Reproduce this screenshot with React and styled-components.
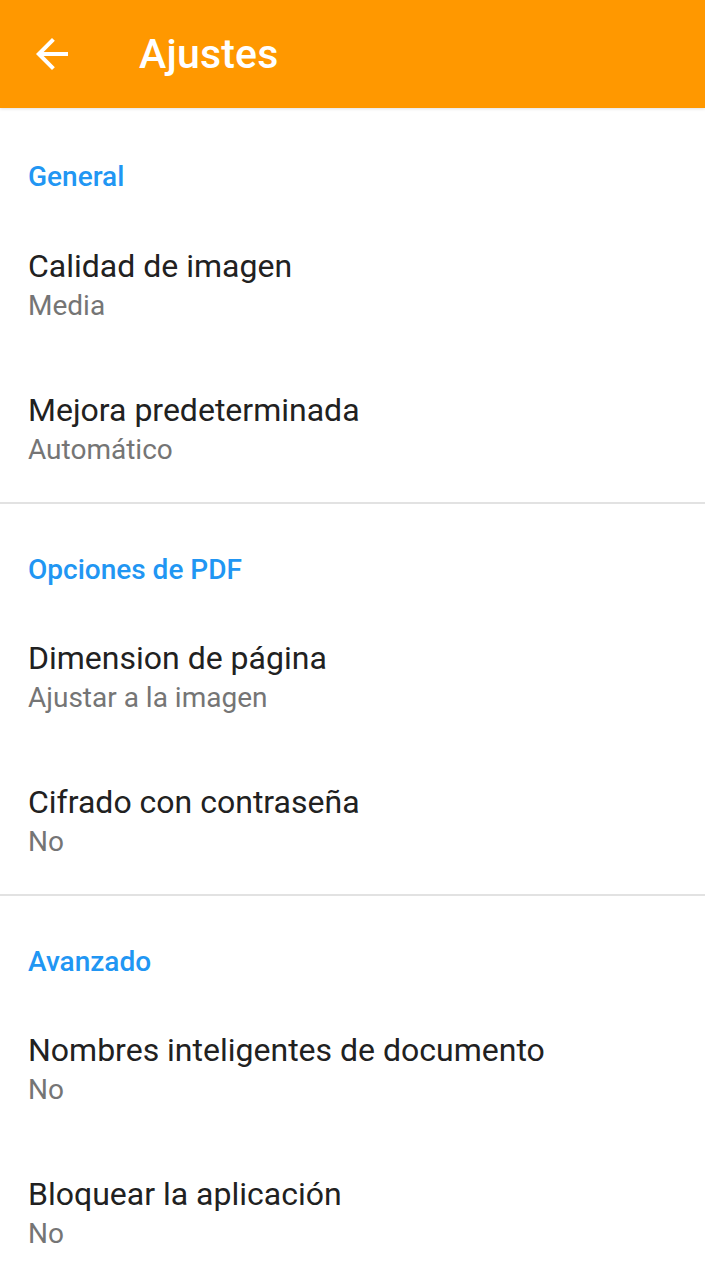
import React from "react";
import styled, { createGlobalStyle } from "styled-components";

const Global = createGlobalStyle`
  html, body { margin: 0; padding: 0; background: #ffffff; }
  body { font-family: Roboto, "Noto Sans", "Liberation Sans", sans-serif; -webkit-font-smoothing: antialiased; }
  * { box-sizing: border-box; }
`;

const Page = styled.div`
  width: 705px;
  min-height: 1279px;
  background: #ffffff;
  overflow: hidden;
`;

const Toolbar = styled.header`
  height: 108px;
  background: #ff9800;
  display: flex;
  align-items: center;
  padding-left: 28px;
  box-shadow: 0 1px 3px rgba(0, 0, 0, 0.12);
`;

const IconButton = styled.button`
  width: 48px;
  height: 48px;
  border: 0;
  padding: 0;
  background: transparent;
  display: flex;
  align-items: center;
  justify-content: center;
  color: #ffffff;
`;

const ToolbarTitle = styled.h1`
  margin: 0 0 0 63px;
  font-size: 41px;
  line-height: 48px;
  font-weight: 500;
  color: #ffffff;
  letter-spacing: 0.2px;
`;

const Section = styled.section`
  border-top: ${(p) => (p.$first ? "none" : "2px solid #e2e2e2")};
`;

const Category = styled.div`
  height: ${(p) => (p.$first ? "106px" : "102px")};
  padding: ${(p) => (p.$first ? "53px" : "50px")} 28px 0 28px;
  font-size: 28px;
  line-height: 32px;
  font-weight: 500;
  color: #2196f3;
`;

const Item = styled.div`
  height: 144px;
  padding: 0 28px;
  display: flex;
  flex-direction: column;
  justify-content: center;
`;

const ItemTitle = styled.div`
  font-size: 32px;
  line-height: 40px;
  color: #212121;
`;

const ItemSummary = styled.div`
  font-size: 28px;
  line-height: 40px;
  color: #757575;
`;

const BackArrow = () => (
  <svg width="48" height="48" viewBox="0 0 24 24" fill="currentColor">
    <path d="M20 11H7.83l5.59-5.59L12 4l-8 8 8 8 1.41-1.41L7.83 13H20v-2z" />
  </svg>
);

const sections = [
  {
    title: "General",
    items: [
      ["Calidad de imagen", "Media"],
      ["Mejora predeterminada", "Automático"],
    ],
  },
  {
    title: "Opciones de PDF",
    items: [
      ["Dimension de página", "Ajustar a la imagen"],
      ["Cifrado con contraseña", "No"],
    ],
  },
  {
    title: "Avanzado",
    items: [
      ["Nombres inteligentes de documento", "No"],
      ["Bloquear la aplicación", "No"],
    ],
  },
];

export default function App() {
  return (
    <Page>
      <Global />
      <Toolbar>
        <IconButton aria-label="Atrás">
          <BackArrow />
        </IconButton>
        <ToolbarTitle>Ajustes</ToolbarTitle>
      </Toolbar>
      {sections.map((s, i) => (
        <Section key={s.title} $first={i === 0}>
          <Category $first={i === 0}>{s.title}</Category>
          {s.items.map(([t, sub]) => (
            <Item key={t}>
              <ItemTitle>{t}</ItemTitle>
              <ItemSummary>{sub}</ItemSummary>
            </Item>
          ))}
        </Section>
      ))}
    </Page>
  );
}
